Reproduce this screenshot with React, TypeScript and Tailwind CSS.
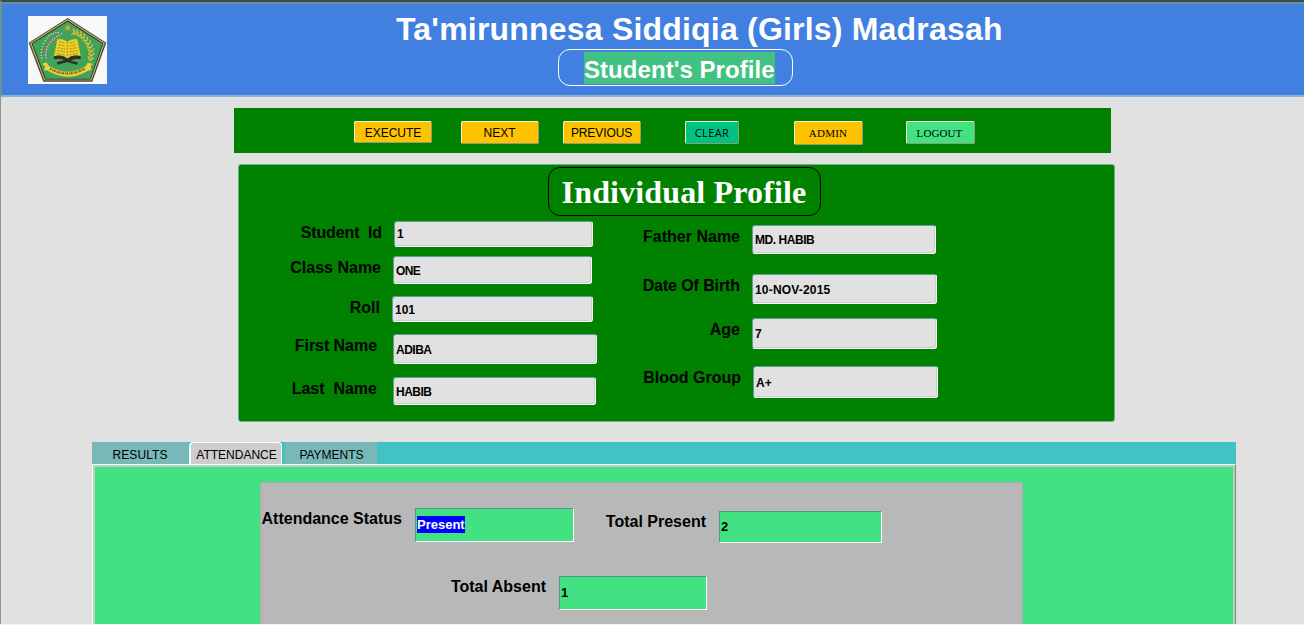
import React from "react";

const sunken =
  "border border-t-[#5f9ea0] border-l-[#5f9ea0] border-b-white border-r-white";

function Emblem() {
  const dots = [
    [91, 50], [84, 50], [77, 52], [70, 55], [63, 60], [57, 67], [52, 74], [47, 82],
    [43, 91], [41, 100], [40, 109], [40, 118], [41, 126],
    [101, 52], [94, 58], [87, 62], [80, 67], [74, 72], [68, 78], [63, 85], [59, 92],
    [56, 100], [54, 108], [53, 117], [54, 125],
  ];
  const wheat = [
    [138, 48, 15], [148, 51, 25], [158, 56, 35], [167, 63, 45], [175, 72, 55],
    [182, 82, 65], [187, 93, 75], [190, 105, 85], [190, 117, 95], [187, 129, 105],
  ];
  return (
    <svg viewBox="0 0 237 204" className="block h-[68px] w-[79px] shrink-0">
      <rect width="237" height="204" fill="#f7f8f8" />
      <path d="M119 6 L235 80 L193 197 L46 197 L2 80 Z" fill="#574b2c" />
      <path d="M119 10 L230 81 L190 193 L49 193 L7 81 Z" fill="#d8d1a0" />
      <path d="M119 13 L227 82 L188 191 L51 191 L10 82 Z" fill="#3c4026" />
      <path d="M119 17 L223 83 L186 188 L54 188 L14 83 Z" fill="#40a357" />
      <path
        d="M119 25 L122 32 L130 32 L124 37 L126 45 L119 40 L112 45 L114 37 L108 32 L116 32 Z"
        fill="#d9a832"
      />
      <path d="M97 53 Q53 72 47 127" fill="none" stroke="#6c8965" strokeWidth="12" />
      {dots.map(([x, y]) => (
        <circle key={`${x}-${y}`} cx={x} cy={y} r="2.1" fill="#d9e3df" />
      ))}
      <path d="M135 46 Q184 67 188 137" fill="none" stroke="#9ba239" strokeWidth="6" />
      {wheat.map(([x, y, a]) => (
        <g key={`${x}-${y}`} transform={`translate(${x} ${y}) rotate(${a})`}>
          <path d="M-6 -9 L3 0 L-6 9" fill="none" stroke="#d9c53e" strokeWidth="4" />
        </g>
      ))}
      <path d="M88 70 Q103 66 118 77 Q133 66 148 70 L158 120 Q136 113 118 126 Q101 112 78 121 Z" fill="#f0cf24" />
      <path d="M118 78 V124 M94 77 l17 4 M92 86 l19 4 M90 95 l21 4 M88 104 l23 4 M86 112 l25 5 M125 81 l17 -4 M125 90 l20 -4 M125 99 l21 -4 M125 108 l23 -4 M125 117 l25 -5" stroke="#8b812b" strokeWidth="2.5" strokeDasharray="6 3" fill="none" />
      <path d="M78 121 Q101 114 118 128 Q136 114 158 121 L158 130 Q140 126 128 134 L150 139 L146 146 L118 138 L90 146 L86 139 L108 133 Q98 126 78 130 Z" fill="#332f24" />
      <path d="M43 143 L55 139 L62 149 Q119 185 174 150 L179 140 L195 143 L188 151 L190 162 L180 164 Q119 201 57 163 L47 163 L52 153 Z" fill="#efd13c" />
      <path d="M66 158 Q119 187 170 158" stroke="#76621e" strokeWidth="7" strokeDasharray="5 3 3 2" fill="none" />
    </svg>
  );
}

function ToolButton({ label, className }: { label: string; className: string }) {
  return (
    <button
      className={`flex shrink-0 items-center justify-center rounded-[2px] border border-t-[#f5f5d0] border-l-[#f5f5d0] border-r-[#8f9f70] border-b-[#8f9f70] leading-none ${className}`}
    >
      {label}
    </button>
  );
}

function Field({
  label,
  value,
  row,
  labelClass,
  inputClass,
}: {
  label: string;
  value: string;
  row: string;
  labelClass: string;
  inputClass: string;
}) {
  return (
    <div className={`flex items-start ${row}`}>
      <span className={`mt-[3px] flex shrink-0 justify-end text-[16px] leading-[18px] font-bold whitespace-pre ${labelClass}`}>
        {label}
      </span>
      <div
        className={`flex shrink-0 items-center rounded-[3px] bg-[#e1e1e1] pl-[2px] text-[12px] leading-none font-bold shadow-[inset_-1px_-1px_0_#c6d0c6] ${sunken} ${inputClass}`}
      >
        {value}
      </div>
    </div>
  );
}

function StatField({
  label,
  labelClass,
  boxClass,
  children,
}: {
  label: string;
  labelClass: string;
  boxClass: string;
  children: React.ReactNode;
}) {
  return (
    <div className="flex items-start">
      <span className={`flex shrink-0 justify-end text-[16px] leading-[18px] font-bold whitespace-nowrap ${labelClass}`}>
        {label}
      </span>
      <div
        className={`flex shrink-0 items-center border border-t-[#4a9a8c] border-r-white border-b-white border-l-[#4a9a8c] bg-[#42e282] pb-[2px] pl-[1px] text-[13px] leading-[17px] font-bold ${boxClass}`}
      >
        {children}
      </div>
    </div>
  );
}

export default function App() {
  return (
    <div className="flex h-[625px] w-[1304px] flex-col overflow-hidden border-b border-b-[#f2f4f3] bg-[#e1e1e1] font-['Liberation_Sans',sans-serif] text-black">
      <header className="flex h-[97px] shrink-0 items-start border-t-2 border-b-2 border-l-2 border-t-[#364c53] border-b-[#8db4cf] border-l-[#6c9590] bg-[#4180e1] shadow-[inset_0_2px_0_#6a9193]">
        <div className="mt-[14px] ml-[26px]">
          <Emblem />
        </div>
        <div className="ml-[289px] flex w-[620px] flex-col items-start">
          <h1 className="mt-[9px] text-[32px] leading-[36px] font-bold tracking-[0.2px] whitespace-nowrap text-white">
            Ta&apos;mirunnesa Siddiqia (Girls) Madrasah
          </h1>
          <div className="mt-[2px] ml-[162px] flex h-[37px] w-[235px] items-center rounded-[12px] border border-white pl-[25px]">
            <span className="h-[32px] w-[191px] bg-[#42c282] text-[24px] leading-[35px] font-bold tracking-[0.05px] whitespace-nowrap text-white">
              Student&apos;s Profile
            </span>
          </div>
        </div>
      </header>

      <div className="flex h-[528px] shrink-0 flex-col border-l border-[#8c9794]">
        <nav className="mt-[11px] ml-[233px] flex h-[45px] w-[877px] shrink-0 items-start bg-[#008200] pt-[13px] pl-[120px]">
          <ToolButton label="EXECUTE" className="h-[22px] w-[78px] bg-[#ffc200] pt-[2px] text-[12px]" />
          <ToolButton label="NEXT" className="ml-[29px] h-[23px] w-[78px] bg-[#ffc200] pr-[1px] text-[12px]" />
          <ToolButton label="PREVIOUS" className="ml-[24px] h-[23px] w-[78px] bg-[#ffc200] pr-[1px] text-[12px] tracking-[-0.1px]" />
          <ToolButton label="CLEAR" className="ml-[44px] h-[23px] w-[54px] bg-[#00c282] font-['Open_Sans',sans-serif] text-[11px] tracking-[0.4px]" />
          <ToolButton label="ADMIN" className="ml-[55px] h-[24px] w-[69px] bg-[#ffc200] pr-[1px] font-['Liberation_Serif',serif] text-[11px] tracking-[0.2px]" />
          <ToolButton label="LOGOUT" className="ml-[43px] h-[23px] w-[69px] bg-[#42e282] pt-[2px] pr-[2px] font-['Liberation_Serif',serif] text-[11px] tracking-[0.1px]" />
        </nav>

        <section className="mt-[11px] ml-[237px] flex h-[258px] w-[877px] shrink-0 flex-col rounded-[3px] border border-[#66b58a] bg-[#008200]">
          <h2 className="mt-[2px] ml-[309px] flex h-[49px] w-[273px] shrink-0 items-center justify-center rounded-[12px] border border-black pr-[1px] font-['Liberation_Serif',serif] text-[32px] leading-none font-bold tracking-[0.15px] whitespace-nowrap text-white">
            Individual Profile
          </h2>
          <div className="flex">
            <div className="flex w-[404px] shrink-0 flex-col pt-[5px]">
              <Field label="Student  Id" value="1" row="h-[35px]" labelClass="w-[143px] tracking-[-0.12px]" inputClass="ml-[12px] h-[26px] w-[199px]" />
              <Field label="Class Name" value="ONE" row="h-[40px]" labelClass="w-[142px]" inputClass="ml-[12px] h-[28px] w-[199px] pt-[1px] tracking-[-0.6px]" />
              <Field label="Roll" value="101" row="h-[38px]" labelClass="w-[141px]" inputClass="ml-[12px] h-[26px] w-[201px] pt-[2px]" />
              <Field label="First Name" value="ADIBA" row="h-[43px]" labelClass="w-[138px] tracking-[-0.05px]" inputClass="ml-[16px] h-[30px] w-[204px] pt-[2px] tracking-[-0.5px]" />
              <Field label="Last  Name" value="HABIB" row="h-[28px]" labelClass="w-[138px]" inputClass="ml-[16px] h-[28px] w-[203px] pt-[2px] tracking-[-0.5px]" />
            </div>
            <div className="flex flex-col pt-[9px]">
              <Field label="Father Name" value="MD. HABIB" row="h-[49px]" labelClass="w-[97px]" inputClass="ml-[12px] h-[29px] w-[184px] tracking-[-0.45px]" />
              <Field label="Date Of Birth" value="10-NOV-2015" row="h-[44px]" labelClass="w-[97px] tracking-[-0.1px]" inputClass="ml-[12px] h-[30px] w-[185px] pt-[2px] tracking-[0.18px]" />
              <Field label="Age" value="7" row="h-[48px]" labelClass="w-[97px]" inputClass="ml-[12px] h-[31px] w-[185px]" />
              <Field label="Blood Group" value="A+" row="h-[32px]" labelClass="w-[98px]" inputClass="ml-[12px] h-[32px] w-[185px] pt-[2px]" />
            </div>
          </div>
        </section>

        <section className="mt-[20px] ml-[91px] flex w-[1144px] flex-1 flex-col">
          <div className="flex h-[22px] shrink-0 items-end bg-[#42c2c3] text-[12px] leading-none">
            <div className="flex h-[22px] w-[96px] items-center justify-center rounded-tr-[3px] bg-[#78b8b8] pt-[3px] tracking-[0.1px]">RESULTS</div>
            <div className="ml-[1px] flex h-[22px] w-[93px] items-center justify-center rounded-t-[4px] border-t border-r border-l-2 border-t-white border-r-white border-l-white bg-[#cfcccc] pt-[2px] pl-[1px]">
              ATTENDANCE
            </div>
            <div className="ml-[3px] flex h-[22px] w-[92px] items-center justify-center rounded-tr-[3px] bg-[#78b8b8] pt-[3px] pl-[1px]">PAYMENTS</div>
          </div>
          <div className="flex flex-1 flex-col border-t border-r border-l border-t-white border-r-[#788b82] border-l-white">
            <div className="flex flex-1 border-t-2 border-r-2 border-l-2 border-[#b5d4c0] bg-[#42e282] pt-[15px] pl-[165px]">
              <div className="flex w-[763px] shrink-0 flex-col border border-b-0 border-[#a4afb0] bg-[#b8b8b8] pt-[24px]">
                <div className="flex">
                  <StatField label="Attendance Status" labelClass="mt-[3px] w-[141px]" boxClass="mt-[1px] ml-[13px] h-[34px] w-[159px]">
                    <span className="bg-[#0000ff] text-white">Present</span>
                  </StatField>
                  <div className="pt-[3px]">
                    <StatField label="Total Present" labelClass="mt-[3px] w-[132px]" boxClass="mt-[1px] ml-[13px] h-[32px] w-[163px]">
                      2
                    </StatField>
                  </div>
                </div>
                <div className="mt-[32px]">
                  <StatField label="Total Absent" labelClass="mt-[3px] w-[285px]" boxClass="mt-[1px] ml-[13px] h-[34px] w-[148px]">
                    1
                  </StatField>
                </div>
              </div>
            </div>
          </div>
        </section>
      </div>
    </div>
  );
}
